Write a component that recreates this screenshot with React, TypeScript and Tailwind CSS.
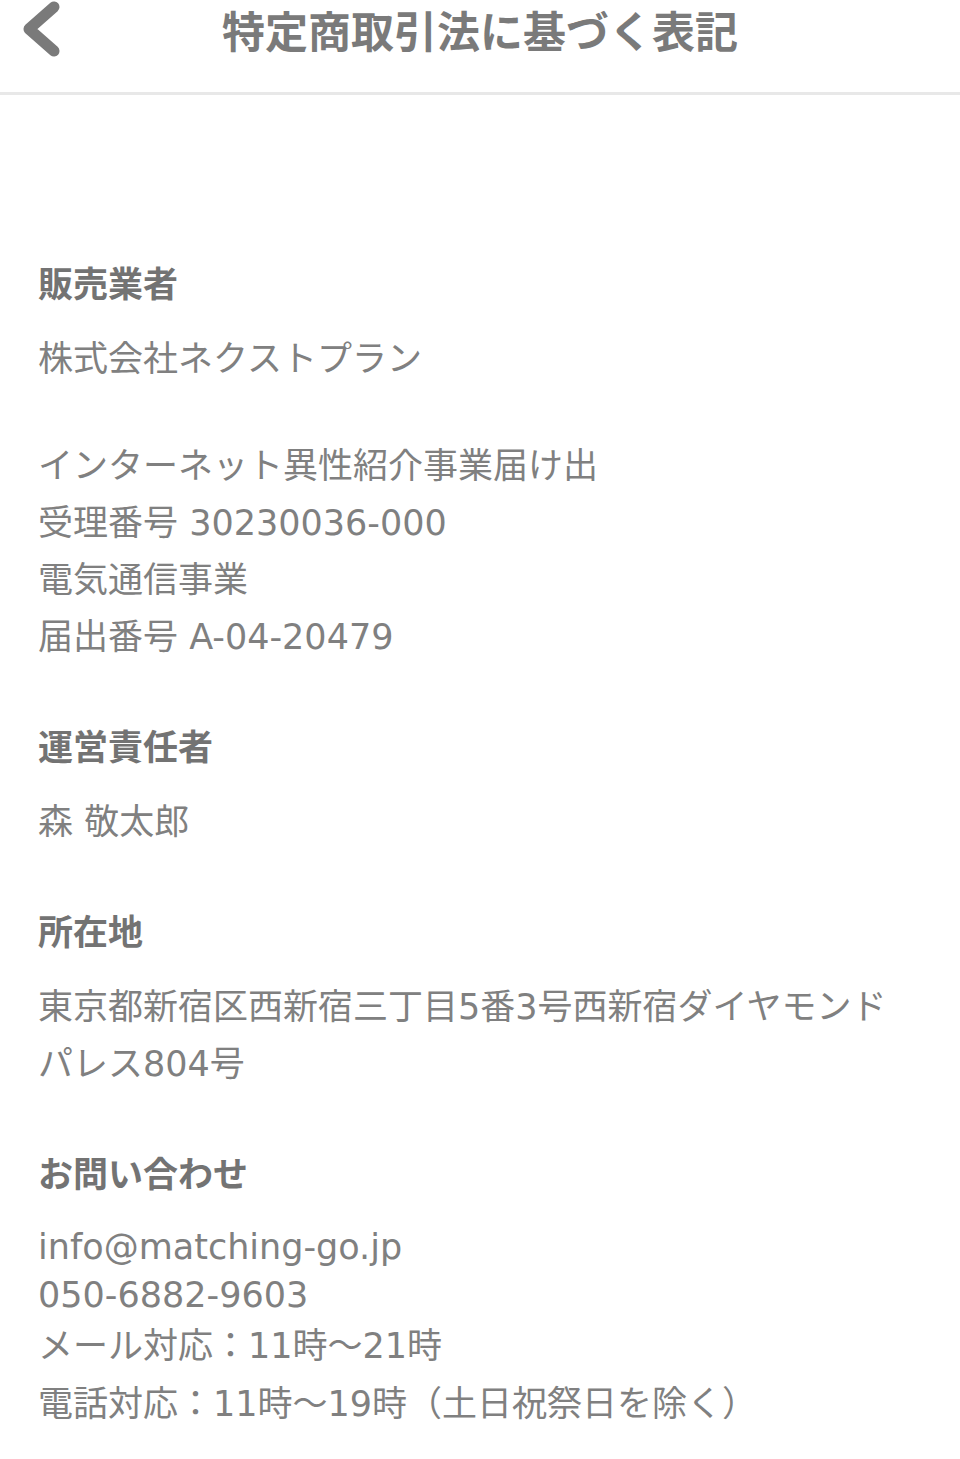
import type { ReactNode } from 'react';

type Line = { text: string; lh?: string };

type Section = {
  title: string;
  bodyGap: string;
  blocks: Line[][];
};

const sections: Section[] = [
  {
    title: '販売業者',
    bodyGap: 'mt-[21px]',
    blocks: [
      [{ text: '株式会社ネクストプラン' }],
      [
        { text: 'インターネット異性紹介事業届け出' },
        { text: '受理番号 30230036-000' },
        { text: '電気通信事業' },
        { text: '届出番号 A-04-20479' },
      ],
    ],
  },
  { title: '運営責任者', bodyGap: 'mt-[21px]', blocks: [[{ text: '森 敬太郎' }]] },
  {
    title: '所在地',
    bodyGap: 'mt-[21px]',
    blocks: [[{ text: '東京都新宿区西新宿三丁目5番3号西新宿ダイヤモンドパレス804号' }]],
  },
  {
    title: 'お問い合わせ',
    bodyGap: 'mt-[23px]',
    blocks: [
      [
        { text: 'info@matching-go.jp', lh: 'leading-[48px]' },
        { text: '050-6882-9603', lh: 'leading-[48px]' },
        { text: 'メール対応：11時〜21時', lh: 'leading-[54px]' },
        { text: '電話対応：11時〜19時（土日祝祭日を除く）', lh: 'leading-[62px]' },
      ],
    ],
  },
];

function Header({ children }: { children: ReactNode }) {
  return (
    <div className="relative h-[95px] border-b-[3px] border-[#e8e8e8] bg-white">
      <button className="absolute left-[18px] top-[1px] h-[56px] w-[46px]" aria-label="back">
        <svg viewBox="0 0 46 56" className="h-full w-full">
          <path
            d="M36 6 L11 28 L36 50"
            fill="none"
            stroke="#7a7a7a"
            strokeWidth="11"
            strokeLinecap="round"
            strokeLinejoin="round"
          />
        </svg>
      </button>
      <h1 className="pt-[3px] text-center text-[43px] font-bold leading-[52px] text-[#7a7a7a]">
        {children}
      </h1>
    </div>
  );
}

export default function App() {
  return (
    <div
      className="min-h-[1459px] bg-white"
      style={{ fontFamily: '"DejaVu Sans", "Noto Sans CJK JP", sans-serif' }}
    >
      <Header>
        <span style={{ fontFamily: '"Noto Sans CJK JP", sans-serif' }}>特定商取引法に基づく表記</span>
      </Header>

      <div className="flex flex-col gap-[50px] pl-[38px] pr-[44px] pt-[158px]">
        {sections.map((section) => (
          <section key={section.title}>
            <h2
              className="text-[35px] font-bold leading-[57px] text-[#737373]"
              style={{ fontFamily: '"Noto Sans CJK JP", sans-serif' }}
            >
              {section.title}
            </h2>
            <div className={`${section.bodyGap} flex flex-col gap-[50px]`}>
              {section.blocks.map((block, i) => (
                <div key={i}>
                  {block.map((line) => (
                    <p
                      key={line.text}
                      className={`text-[35px] text-[#808080] ${line.lh ?? 'leading-[57px]'}`}
                    >
                      {line.text}
                    </p>
                  ))}
                </div>
              ))}
            </div>
          </section>
        ))}
      </div>
    </div>
  );
}
